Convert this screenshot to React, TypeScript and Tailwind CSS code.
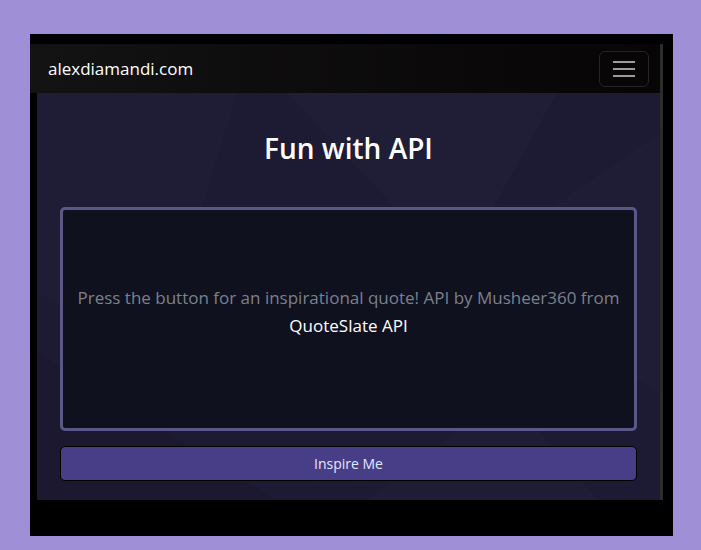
import React from 'react';

const font = { fontFamily: '"Open Sans", "Noto Sans", sans-serif' };

function Hamburger() {
  return (
    <button className="w-[50px] h-[36px] rounded-[6px] border border-[#262626] flex flex-col items-center justify-center gap-[5px]">
      <span className="block w-[22px] h-[2px] bg-[#9c9c9c]" />
      <span className="block w-[22px] h-[2px] bg-[#9c9c9c]" />
      <span className="block w-[22px] h-[2px] bg-[#9c9c9c]" />
    </button>
  );
}

export default function App() {
  return (
    <div className="w-full h-[550px] bg-[#9f8fd6] pl-[30px] pt-[34px]" style={font}>
      <div className="w-[643px] h-[502px] bg-black pl-[7px] pt-[10px]">
        <div className="flex w-[626px]">
          <div className="w-[623px] flex flex-col">
            <nav className="h-[49px] bg-gradient-to-r from-[#131313] to-[#070505] flex items-center justify-between -ml-[7px] pl-[18px] pr-[11px]">
              <span className="text-white text-[17px]">alexdiamandi.com</span>
              <Hamburger />
            </nav>
            <main className="relative h-[407px] bg-[#1d1a33] overflow-hidden px-[23px]">
              <svg className="absolute inset-0" width="623" height="407" viewBox="0 0 623 407">
                <polygon points="0,0 200,0 120,260 0,200" fill="#ffffff" opacity="0.012" />
                <polygon points="250,0 520,0 420,180" fill="#ffffff" opacity="0.015" />
                <polygon points="420,180 623,40 623,300" fill="#ffffff" opacity="0.01" />
                <polygon points="0,260 240,407 0,407" fill="#000000" opacity="0.05" />
                <polygon points="330,407 470,300 560,407" fill="#ffffff" opacity="0.012" />
              </svg>
              <div className="relative flex flex-col">
                <h1 className="text-white text-[28px] font-semibold text-center pt-[36px] leading-[38px]">Fun with API</h1>
                <div className="mt-[40px] h-[224px] rounded-[5px] border-[3px] border-[#5b5887] bg-[#10111f] flex items-center justify-center px-[14px] pb-[14px]">
                  <p className="text-center text-[17px] leading-[28px] text-[#7d808c]">
                    Press the button for an inspirational quote! API by Musheer360 from{' '}
                    <span className="text-white">QuoteSlate API</span>
                  </p>
                </div>
                <button className="mt-[15px] h-[35px] rounded-[5px] border border-black bg-[#473e87] text-[#e4e8ff] text-[14px]">
                  Inspire Me
                </button>
              </div>
            </main>
          </div>
          <div className="w-[3px] h-[456px] bg-[#2b2b2b]" />
        </div>
      </div>
    </div>
  );
}
